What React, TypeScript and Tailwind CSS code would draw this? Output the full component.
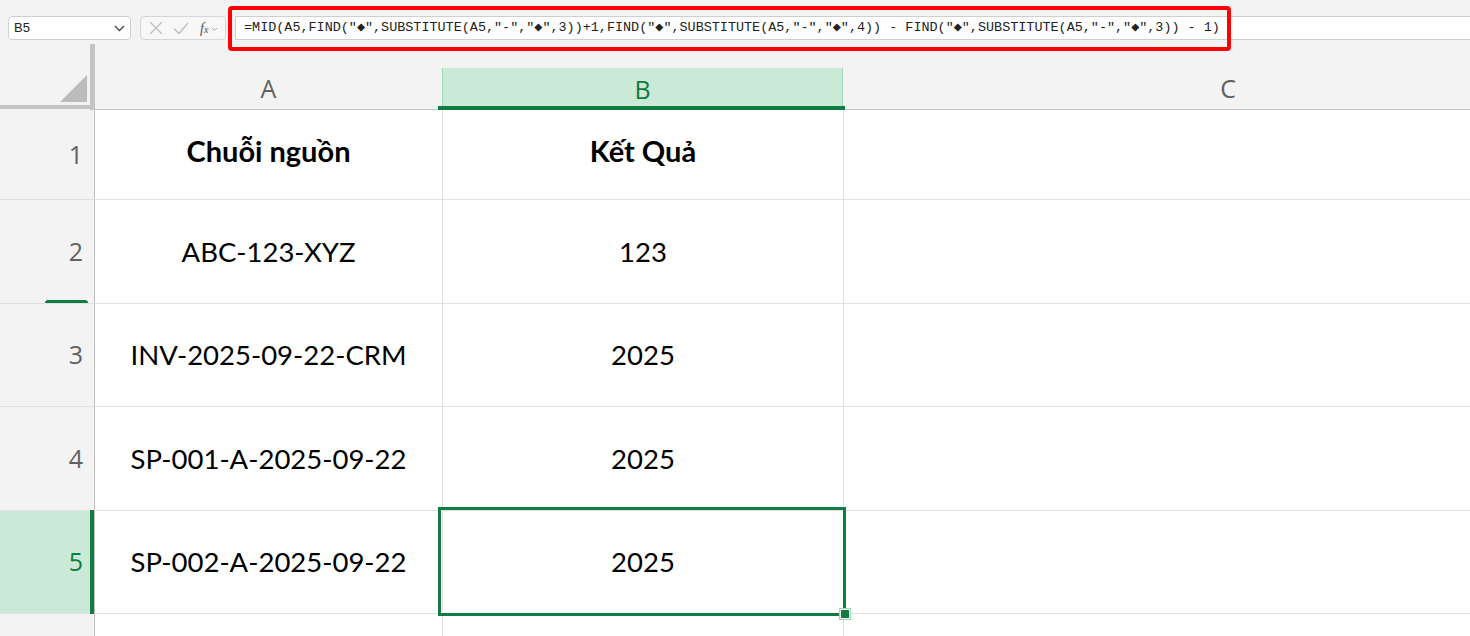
import React from "react";

const formula =
  '=MID(A5,FIND("◆",SUBSTITUTE(A5,"-","◆",3))+1,FIND("◆",SUBSTITUTE(A5,"-","◆",4)) - FIND("◆",SUBSTITUTE(A5,"-","◆",3)) - 1)';

const rows = [
  { n: 1, a: "Chuỗi nguồn", b: "Kết Quả", bold: true, h: "h-[90px]" },
  { n: 2, a: "ABC-123-XYZ", b: "123", h: "h-[104px]" },
  { n: 3, a: "INV-2025-09-22-CRM", b: "2025", h: "h-[103px]" },
  { n: 4, a: "SP-001-A-2025-09-22", b: "2025", h: "h-[104px]" },
  { n: 5, a: "SP-002-A-2025-09-22", b: "2025", h: "h-[103px]", sel: true },
  { n: 6, a: "", b: "", h: "h-[60px]" },
];

export default function App() {
  return (
    <div className="relative w-[1470px] h-[636px] overflow-hidden bg-[#f3f3f3] font-['Lato',sans-serif]">
      {/* formula bar */}
      <div className="flex items-center h-[68px] pb-[28px] pt-[16px] pl-[8px] gap-[9px] relative">
        <div className="flex items-center justify-between w-[123px] h-[24px] bg-white border border-[#cfcfcf] rounded-[4px] pl-[5px] pr-[5px]">
          <span className="text-[13px] text-[#222] font-['Liberation_Sans',sans-serif]">B5</span>
          <svg width="11" height="7" viewBox="0 0 11 7">
            <path d="M1 1l4.5 4.5L10 1" stroke="#444" strokeWidth="1.3" fill="none" />
          </svg>
        </div>
        <div className="flex items-center w-[86px] h-[24px] border border-[#d6d6d6] rounded-[4px] bg-[#f7f7f7] pl-[8px] gap-[10px]">
          <svg width="14" height="14" viewBox="0 0 14 14">
            <path d="M1 1l12 12M13 1L1 13" stroke="#bdbdbd" strokeWidth="1.2" />
          </svg>
          <svg width="16" height="13" viewBox="0 0 16 13">
            <path d="M1 6.5l5 5L15 1" stroke="#bdbdbd" strokeWidth="1.2" fill="none" />
          </svg>
          <span className="text-[14px] italic text-[#555] font-['Liberation_Serif',serif] ml-[1px]">
            f<span className="text-[10px]">x</span>
          </span>
          <svg width="7" height="5" viewBox="0 0 7 5" className="-ml-[7px] mt-[2px]">
            <path d="M1 1l2.5 2.5L6 1" stroke="#aaa" strokeWidth="1" fill="none" />
          </svg>
        </div>
        <div className="flex-1 h-[24px] bg-white border-y border-l border-[#cfcfcf] flex items-center pl-[8px]">
          <span className="font-['Liberation_Mono','DejaVu_Sans_Mono',monospace] text-[13.45px] text-[#222] whitespace-pre">
            {formula}
          </span>
        </div>
        <div className="absolute left-[228px] top-[6px] w-[1003px] h-[45px] border-[4px] border-[#ff0000] rounded-[4px]" />
      </div>

      {/* corner vertical bar */}
      <div className="absolute left-[90px] top-[44px] w-[5px] h-[66px] bg-[#c4c4c4]" />

      {/* column header */}
      <div className="flex h-[42px]">
        <div className="relative w-[95px] shrink-0 h-full">
          <svg className="absolute left-[60px] top-[7px]" width="27" height="27" viewBox="0 0 27 27">
            <path d="M27 0V27H0Z" fill="#bcbcbc" />
          </svg>
          <div className="absolute left-0 bottom-[1px] w-[95px] h-[4px] bg-[#c4c4c4]" />
        </div>
        <div className="w-[347px] shrink-0 h-full flex items-center justify-center border-b border-[#c6c6c6] text-[25px] text-[#616161] font-['Open_Sans',sans-serif] pt-[1px]">
          A
        </div>
        <div className="relative w-[401px] shrink-0 h-full flex items-center justify-center bg-[#cae9d6] border-x border-[#9fd7b7] text-[25px] text-[#107c41] font-['Open_Sans',sans-serif] pt-[1px]">
          B
          <div className="absolute -left-[5px] -right-[3px] bottom-[0px] h-[4px] bg-[#107c41]" />
        </div>
        <div className="w-[770px] shrink-0 h-full flex items-center justify-center border-b border-[#c6c6c6] text-[25px] text-[#616161] font-['Open_Sans',sans-serif] pt-[1px]">
          C
        </div>
      </div>

      {/* rows */}
      <div className="flex flex-col">
        {rows.map((r) => (
          <div key={r.n} className={`flex ${r.h} border-b border-[#e1e1e1]`}>
            <div
              className={`relative w-[95px] shrink-0 flex items-center justify-end pr-[11px] text-[25px] font-['Open_Sans',sans-serif] border-r border-[#bdbdbd] ${
                r.sel ? "bg-[#cae9d6] text-[#107c41]" : "bg-[#f3f3f3] text-[#616161]"
              }`}
            >
              {r.n <= 5 ? r.n : ""}
              {r.sel && <div className="absolute right-[0px] -top-[1px] -bottom-[8px] w-[4px] bg-[#107c41]" />}
              {r.n === 2 && (
                <div className="absolute z-10 left-[45px] bottom-[0px] w-[43px] h-[3px] rounded-t-[3px] bg-[#107c41]" />
              )}
            </div>
            <div
              className={`w-[347px] shrink-0 bg-white flex items-center justify-center text-black ${
                r.bold ? "font-bold text-[29px] pb-[8px]" : "text-[27.5px]"
              }`}
            >
              {r.a}
            </div>
            <div
              className={`w-[401px] shrink-0 bg-white border-l border-[#e1e1e1] flex items-center justify-center text-black ${
                r.bold ? "font-bold text-[29px] pb-[8px]" : "text-[27.5px]"
              }`}
            >
              {r.b}
            </div>
            <div className="w-[770px] shrink-0 bg-white border-l border-[#e1e1e1]" />
          </div>
        ))}
      </div>

      {/* selection */}
      <div className="absolute left-[438px] top-[507px] w-[408px] h-[109px] border-[3px] border-[#107c41]" />
      <div className="absolute left-[840px] top-[609px] w-[10px] h-[10px] bg-[#107c41] border-[1.5px] border-white outline outline-1 outline-[#9fd7b7]" />
    </div>
  );
}
